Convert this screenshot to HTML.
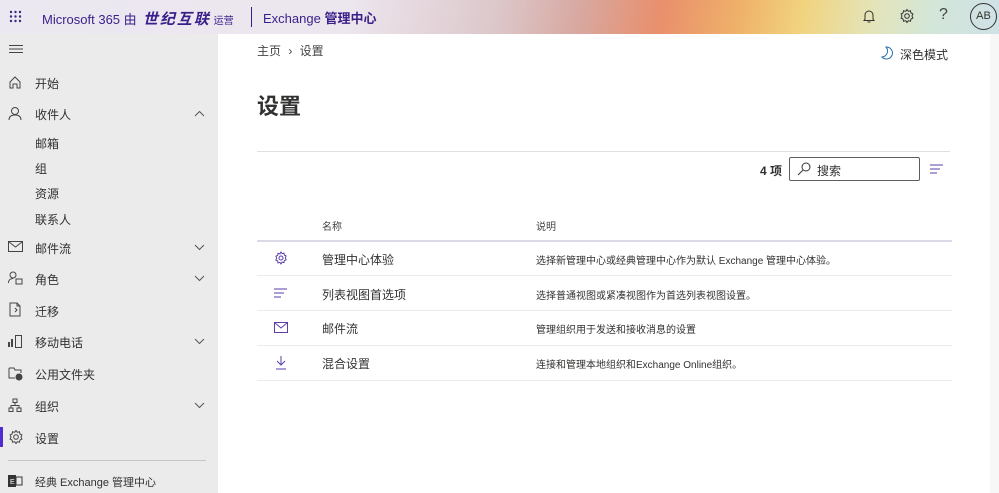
<!DOCTYPE html>
<html><head><meta charset="utf-8"><style>
*{margin:0;padding:0;box-sizing:border-box}
body{width:999px;height:493px;overflow:hidden;font-family:"Liberation Sans","Noto Sans CJK SC",sans-serif;color:#323130;background:#fff;position:relative}
.hdr{position:absolute;left:0;top:0;width:999px;height:34px;background:linear-gradient(100deg,#ebe8f1 0%,#ece6ee 35%,#dcc6c9 50%,#d8a8a0 58%,#e98f6c 66%,#efb26a 74%,#f1d37e 80%,#e4e4b8 87%,#d3e6d8 93%,#cfe1e6 100%)}
.a{position:absolute;white-space:nowrap}
.side{position:absolute;left:0;top:34px;width:218px;height:459px;background:#ebebeb}
.nav{position:absolute;left:35px;font-size:12px;color:#323130}
.ic{position:absolute;left:8px}
.chev{position:absolute;left:194px}
.row{position:absolute;left:257px;width:695px;border-bottom:1px solid #edebe9;height:35px}
.t{font-size:12px}
.d{font-size:10px}
</style></head><body>
<div class="hdr"></div>
<svg class="a" style="left:9px;top:10px" width="13" height="13" fill="#3b2a7a"><circle cx="2" cy="2" r="1.2"/><circle cx="6.5" cy="2" r="1.2"/><circle cx="11" cy="2" r="1.2"/><circle cx="2" cy="6.5" r="1.2"/><circle cx="6.5" cy="6.5" r="1.2"/><circle cx="11" cy="6.5" r="1.2"/><circle cx="2" cy="11" r="1.2"/><circle cx="6.5" cy="11" r="1.2"/><circle cx="11" cy="11" r="1.2"/></svg>
<div class="a" style="left:42px;top:8px;font-size:13px;color:#3a1f8a">Microsoft 365 由<b style="font-style:italic;font-size:15px;letter-spacing:2px"> 世纪互联</b><span style="font-size:10px"> 运营</span></div>
<div class="a" style="left:251px;top:7px;width:1px;height:20px;background:#3a1f8a"></div>
<div class="a" style="left:263px;top:8px;font-size:13px;color:#3a1f8a">Exchange <b>管理中心</b></div>
<svg class="a" style="left:862px;top:9px" width="14" height="15" fill="none" stroke="#333"><path d="M3 10V6a4 4 0 0 1 8 0v4l1 1.5H2z M5.5 13h3"/></svg>
<svg class="a" style="left:899px;top:8px" width="16" height="16" fill="none" stroke="#333"><circle cx="8" cy="8" r="2.3"/><path d="M8 1.5l1.3 1.8 2.2-.6.4 2.2 2 1L13 8l.9 2.1-2 1-.4 2.2-2.2-.6L8 14.5l-1.3-1.8-2.2.6-.4-2.2-2-1L3 8l-.9-2.1 2-1 .4-2.2 2.2.6z"/></svg>
<div class="a" style="left:939px;top:6px;font-size:16px;color:#444">?</div>
<div class="a" style="left:970px;top:3px;width:27px;height:27px;border:1px solid #333;border-radius:50%;font-size:11px;text-align:center;line-height:25px">AB</div>

<div class="side"></div>
<svg class="a" style="left:9px;top:44px" width="14" height="10" stroke="#444"><path d="M0 1.5h14M0 5h14M0 8.5h14"/></svg>
<svg class="ic" style="top:75px" width="14" height="14" fill="none" stroke="#444"><path d="M2 7l5-5 5 5v6H9V9H5v4H2z"/></svg>
<div class="nav" style="top:75px">开始</div>
<svg class="ic" style="top:106px" width="14" height="14" fill="none" stroke="#444"><circle cx="7" cy="5" r="3.5"/><path d="M1 14c0-4 3-5 6-5s6 1 6 5"/></svg>
<div class="nav" style="top:106px">收件人</div>
<svg class="chev" style="top:110px" width="11" height="7" fill="none" stroke="#555"><path d="M1 6l4.5-4.5L10 6"/></svg>
<div class="nav" style="top:135px">邮箱</div>
<div class="nav" style="top:160px">组</div>
<div class="nav" style="top:185px">资源</div>
<div class="nav" style="top:211px">联系人</div>
<svg class="ic" style="top:241px" width="15" height="12" fill="none" stroke="#444"><rect x=".5" y=".5" width="14" height="10"/><path d="M1 1l6.5 5L14 1"/></svg>
<div class="nav" style="top:240px">邮件流</div>
<svg class="chev" style="top:244px" width="11" height="7" fill="none" stroke="#555"><path d="M1 1l4.5 4.5L10 1"/></svg>
<svg class="ic" style="top:271px" width="15" height="15" fill="none" stroke="#444"><circle cx="5" cy="4" r="3"/><path d="M0.5 12c0-3 2-4.5 4.5-4.5"/><rect x="8" y="8" width="6" height="5"/></svg>
<div class="nav" style="top:271px">角色</div>
<svg class="chev" style="top:275px" width="11" height="7" fill="none" stroke="#555"><path d="M1 1l4.5 4.5L10 1"/></svg>
<svg class="ic" style="top:302px" width="14" height="15" fill="none" stroke="#444"><path d="M9 1H2v13h10V4z M9 1v3h3 M7 6l2 2-2 2"/></svg>
<div class="nav" style="top:303px">迁移</div>
<svg class="ic" style="top:334px" width="15" height="15" fill="#444" stroke="#444"><rect x="0" y="8" width="2" height="5" stroke="none"/><rect x="3" y="5" width="2" height="8" stroke="none"/><rect x="7.5" y="1.5" width="6" height="12" fill="none"/></svg>
<div class="nav" style="top:334px">移动电话</div>
<svg class="chev" style="top:338px" width="11" height="7" fill="none" stroke="#555"><path d="M1 1l4.5 4.5L10 1"/></svg>
<svg class="ic" style="top:366px" width="15" height="15" fill="none" stroke="#444"><path d="M1 2h5l1 2h6v3 M1 2v10h6"/><circle cx="11" cy="11" r="3" fill="#444"/></svg>
<div class="nav" style="top:366px">公用文件夹</div>
<svg class="ic" style="top:398px" width="15" height="15" fill="none" stroke="#444"><rect x="5" y="1" width="4" height="3.5"/><rect x="1" y="10" width="4" height="3.5"/><rect x="9" y="10" width="4" height="3.5"/><path d="M7 4.5v3M3 10V7.5h8V10"/></svg>
<div class="nav" style="top:398px">组织</div>
<svg class="chev" style="top:402px" width="11" height="7" fill="none" stroke="#555"><path d="M1 1l4.5 4.5L10 1"/></svg>
<div class="a" style="left:0;top:427px;width:3px;height:20px;background:#4f2bd0"></div>
<svg class="ic" style="top:429px" width="16" height="16" fill="none" stroke="#444"><circle cx="8" cy="8" r="2.3"/><path d="M8 1.5l1.3 1.8 2.2-.6.4 2.2 2 1L13 8l.9 2.1-2 1-.4 2.2-2.2-.6L8 14.5l-1.3-1.8-2.2.6-.4-2.2-2-1L3 8l-.9-2.1 2-1 .4-2.2 2.2.6z"/></svg>
<div class="nav" style="top:430px">设置</div>
<div class="a" style="left:8px;top:460px;width:198px;height:1px;background:#c8c6c4"></div>
<svg class="ic" style="top:474px" width="15" height="14"><rect x="0" y="1" width="8" height="12" fill="#333"/><rect x="8" y="3" width="6" height="8" fill="none" stroke="#333"/><text x="2" y="10" font-size="7" fill="#fff" font-family="Liberation Sans">E</text></svg>
<div class="nav" style="top:474px;font-size:11px">经典 Exchange 管理中心</div>

<div class="a" style="left:257px;top:42px;font-size:12px;color:#444">主页 <span style="margin:0 4px">›</span> 设置</div>
<svg class="a" style="left:881px;top:46px" width="13" height="14" fill="none" stroke="#2a6fb0"><path d="M5 1a6 6 0 1 1-4 10A6 6 0 0 0 5 1z"/></svg>
<div class="a" style="left:900px;top:46px;font-size:12px">深色模式</div>
<div class="a" style="left:257px;top:89px;font-size:22px;font-weight:bold">设置</div>
<div class="a" style="left:257px;top:151px;width:693px;height:1px;background:#e1dfdd"></div>
<div class="a" style="left:760px;top:162px;font-size:12px;font-weight:bold">4 项</div>
<div class="a" style="left:789px;top:157px;width:131px;height:24px;border:1px solid #605e5c;border-radius:2px"></div>
<svg class="a" style="left:797px;top:162px" width="14" height="14" fill="none" stroke="#333"><circle cx="9" cy="5" r="4"/><path d="M6 8l-5 5"/></svg>
<div class="a" style="left:817px;top:162px;font-size:12px">搜索</div>
<svg class="a" style="left:930px;top:164px" width="13" height="10" stroke="#5b3fa8"><path d="M0 1h13M0 5h10M0 9h7"/></svg>
<div class="a" style="left:322px;top:218px;font-size:10px;color:#444">名称</div>
<div class="a" style="left:536px;top:218px;font-size:10px;color:#444">说明</div>
<div class="a" style="left:257px;top:240px;width:695px;height:2px;background:#dcd8e6"></div>

<div class="row" style="top:241px"></div>
<svg class="a" style="left:274px;top:251px" width="14" height="14" fill="none" stroke="#5b3fa8"><circle cx="7" cy="7" r="2"/><path d="M7 1l1.1 1.6 1.9-.5.3 1.9 1.8.9L11.3 7l.8 1.8-1.8.9-.3 1.9-1.9-.5L7 13l-1.1-1.6-1.9.5-.3-1.9-1.8-.9L2.7 7l-.8-1.8 1.8-.9.3-1.9 1.9.5z"/></svg>
<div class="a t" style="left:322px;top:251px">管理中心体验</div>
<div class="a d" style="left:536px;top:252px">选择新管理中心或经典管理中心作为默认 Exchange 管理中心体验。</div>
<div class="row" style="top:276px"></div>
<svg class="a" style="left:274px;top:288px" width="13" height="10" stroke="#5b3fa8"><path d="M0 1h13M0 5h10M0 9h7"/></svg>
<div class="a t" style="left:322px;top:286px">列表视图首选项</div>
<div class="a d" style="left:536px;top:287px">选择普通视图或紧凑视图作为首选列表视图设置。</div>
<div class="row" style="top:311px"></div>
<svg class="a" style="left:274px;top:322px" width="14" height="11" fill="none" stroke="#5b3fa8"><rect x=".5" y=".5" width="13" height="10"/><path d="M1 1l6 5 6-5"/></svg>
<div class="a t" style="left:322px;top:320px">邮件流</div>
<div class="a d" style="left:536px;top:321px">管理组织用于发送和接收消息的设置</div>
<div class="row" style="top:346px"></div>
<svg class="a" style="left:275px;top:355px" width="12" height="15" fill="none" stroke="#5b3fa8"><path d="M6 1v9M2 6l4 4 4-4M1 14h10"/></svg>
<div class="a t" style="left:322px;top:355px">混合设置</div>
<div class="a d" style="left:536px;top:356px">连接和管理本地组织和Exchange Online组织。</div>
<div class="a" style="left:990px;top:34px;width:9px;height:459px;background:#f7f7f7"></div>
</body></html>
